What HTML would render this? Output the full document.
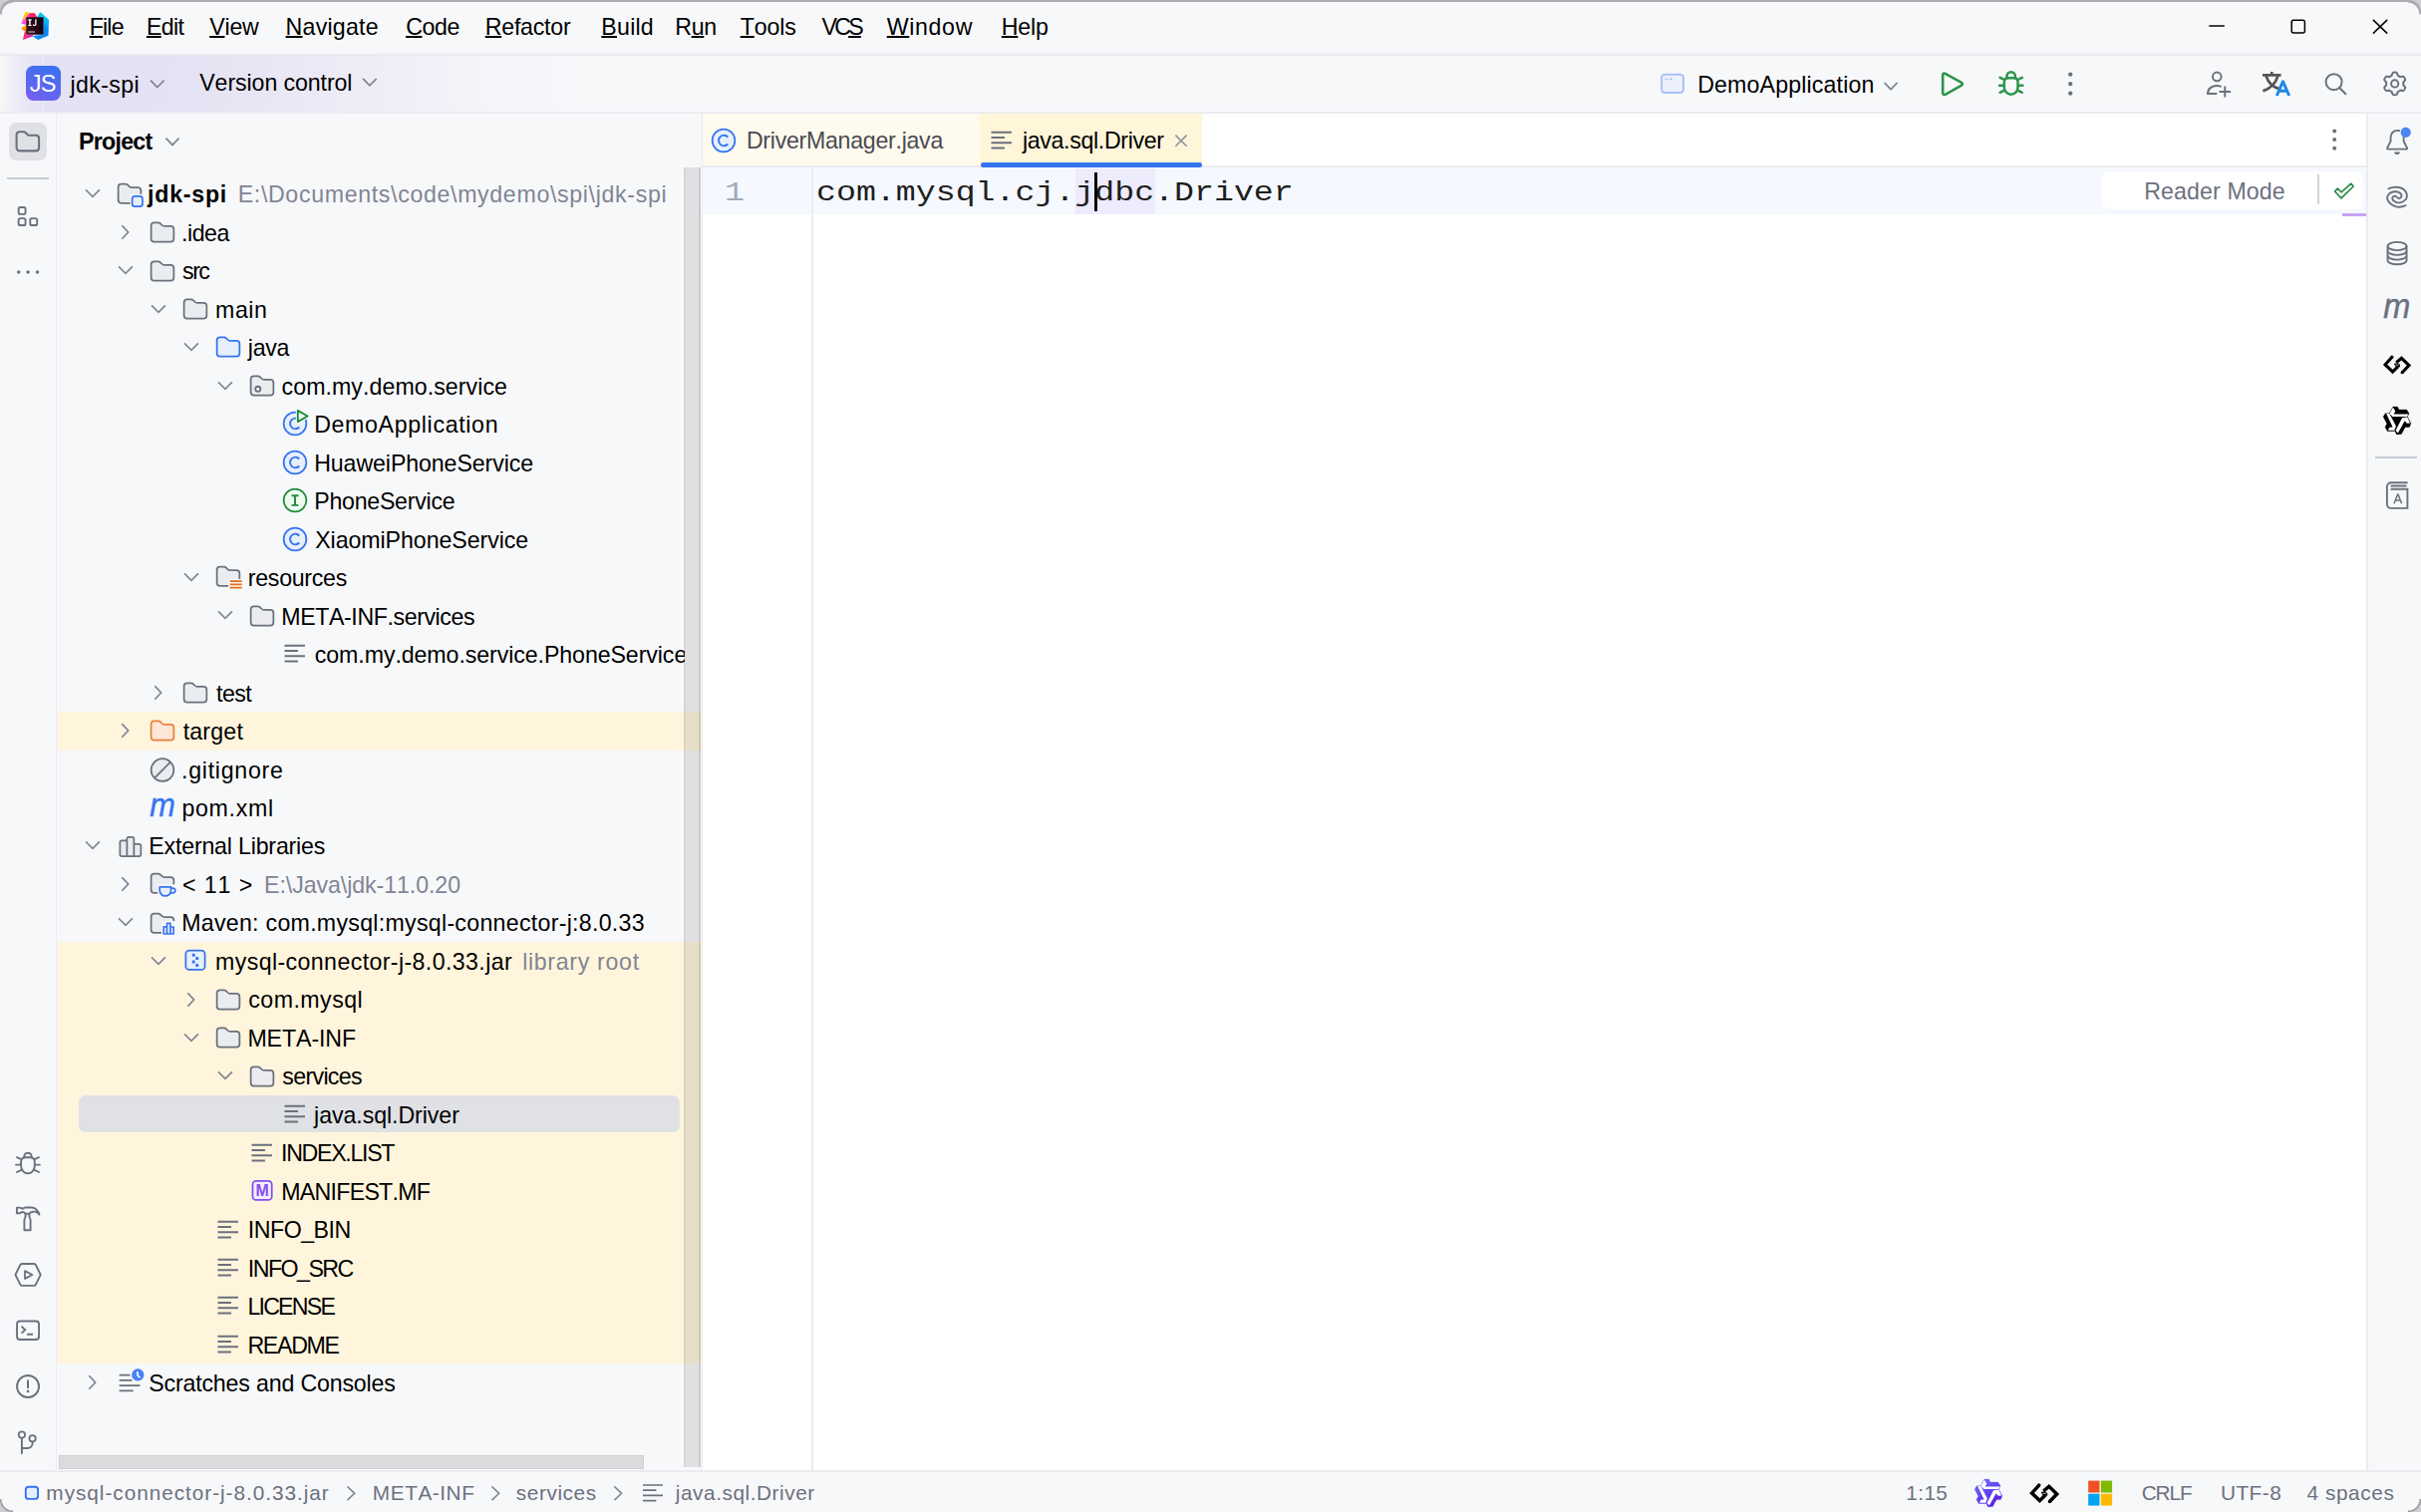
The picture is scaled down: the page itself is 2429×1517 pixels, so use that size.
<!DOCTYPE html><html><head><meta charset="utf-8"><title>jdk-spi</title><style>
*{box-sizing:border-box;margin:0;padding:0}
html,body{width:2429px;height:1517px;overflow:hidden;background:#cdced1;font-family:"Liberation Sans",sans-serif;font-kerning:none}
.abs,.t,svg{position:absolute}
.t{white-space:pre;display:block;height:40px;line-height:40px}
#frame{position:absolute;left:0;top:0;width:2429px;height:1517px;border-radius:12px;background:#adaeb1;overflow:hidden}
#win{position:absolute;left:0;top:2px;width:2429px;height:1515px;border-radius:11.5px 11.5px 12px 12px;background:#f7f8fa;overflow:hidden}
#page{position:absolute;left:0;top:-2px;width:2429px;height:1517px}
.hl{position:absolute;background:#ebecf0}
#toolbar{position:absolute;left:0;top:56px;width:2429px;height:56px;background:linear-gradient(90deg,#f7f8fa 0px,#eeedf7 14px,#e6e4f4 34px,#e3e1f3 44px,#e4e2f3 170px,#eae8f5 290px,#f0eff8 400px,#f5f5fa 500px,#f7f8fa 580px)}
#tree{position:absolute;left:0;top:0;width:686.5px;height:1459px;overflow:hidden}
.yl{position:absolute;left:58px;width:645.8px;height:38.7px;background:#fff5dc}
.sel{position:absolute;left:78.8px;width:603.4px;height:37.7px;border-radius:7px;background:#dfe1e5}
u{text-decoration:underline;text-decoration-thickness:1.75px;text-underline-offset:1.2px;text-decoration-skip-ink:none}
</style></head><body>
<div id="frame"><div id="win"><div id="page">
<div class="hl" style="left:0;top:54px;width:2429px;height:2px"></div>
<svg style="left:20.00px;top:10.00px" width="32" height="32" viewBox="0 0 32 32" fill="none" ><defs><linearGradient id="ly1" x1="0.7" y1="0" x2="0.2" y2="1"><stop offset="0" stop-color="#ffd500"/><stop offset=".55" stop-color="#ffb43c"/><stop offset="1" stop-color="#ff5bd0"/></linearGradient><linearGradient id="ly2" x1="0.5" y1="0" x2="0.4" y2="1"><stop offset="0" stop-color="#ffd000"/><stop offset=".6" stop-color="#ff8a00"/><stop offset="1" stop-color="#ff5a2a"/></linearGradient><linearGradient id="lb" x1="0.6" y1="0" x2="0.4" y2="1"><stop offset="0" stop-color="#08d0f5"/><stop offset=".3" stop-color="#0ab4f8"/><stop offset=".55" stop-color="#0a84fb"/><stop offset="1" stop-color="#0a8cf0"/></linearGradient><linearGradient id="lr" x1="0" y1="0" x2="1" y2="0.4"><stop offset="0" stop-color="#ff3060"/><stop offset=".6" stop-color="#fa2a8c"/><stop offset="1" stop-color="#c41ee0"/></linearGradient><linearGradient id="lk" x1="0" y1="0.6" x2="1" y2="0.4"><stop offset="0" stop-color="#3a1410"/><stop offset=".45" stop-color="#2a0618"/><stop offset="1" stop-color="#06060c"/></linearGradient></defs><path d="M5.35 1.97L8.99 2.11L6.37 8.22L1.28 13.32Z" fill="url(#ly1)"/><path d="M1.28 13.46L6.37 7.50L6.37 14.92Z" fill="#ff45ed"/><path d="M1.13 18.56L6.37 14.63L6.37 22.19L4.48 21.32Z" fill="url(#ly2)"/><path d="M9.13 3.28L14.52 2.98L17.43 6.91L17.43 7.79L6.22 7.79L7.53 5.60Z" fill="#ff2468"/><path d="M6.51 7.64L7.68 5.46L10.30 4.73L9.13 7.64Z" fill="#ff45ed" opacity=".8"/><path d="M20.34 2.05L29.07 9.68L28.49 25.69L18.16 30.11L12.48 25.98L23.69 24.67L23.69 7.50L17.14 7.41Z" fill="url(#lb)"/><path d="M6.22 21.61L6.22 24.96L12.63 24.81L13.35 26.27L2.88 29.91L4.62 22.19Z" fill="url(#lr)"/><path d="M6.22 7.35L23.69 7.35L23.69 24.81L6.22 24.81Z" fill="url(#lk)"/><path d="M8.26 9.24L11.61 9.24L11.61 10.41L10.65 10.41L10.65 14.92L11.61 14.92L11.61 16.08L8.26 16.08L8.26 14.92L9.22 14.92L9.22 10.41L8.26 10.41Z" fill="#fff"/><path d="M15.25 9.24L16.56 9.24L16.56 14.34L16.12 15.56L15.10 16.08L14.08 16.08L13.06 15.56L12.63 14.92L13.56 14.19L14.08 14.77L14.66 14.92L15.10 14.63L15.25 14.04Z" fill="#fff"/><path d="M8.26 21.26L15.01 21.26L15.01 22.83L8.26 22.83Z" fill="#9c9096"/></svg>
<span id="m0" class="t" style="left:89.74px;top:7px;font-size:23.2px;letter-spacing:-0.848px"><u>F</u>ile</span>
<span id="m1" class="t" style="left:146.93px;top:7px;font-size:23.2px;letter-spacing:-0.658px"><u>E</u>dit</span>
<span id="m2" class="t" style="left:210.21px;top:7px;font-size:23.2px;letter-spacing:-0.212px"><u>V</u>iew</span>
<span id="m3" class="t" style="left:286.61px;top:7px;font-size:23.2px;letter-spacing:0.198px"><u>N</u>avigate</span>
<span id="m4" class="t" style="left:407.15px;top:7px;font-size:23.2px;letter-spacing:-0.419px"><u>C</u>ode</span>
<span id="m5" class="t" style="left:486.74px;top:7px;font-size:23.2px;letter-spacing:-0.250px"><u>R</u>efactor</span>
<span id="m6" class="t" style="left:603.35px;top:7px;font-size:23.2px;letter-spacing:0.210px"><u>B</u>uild</span>
<span id="m7" class="t" style="left:677.13px;top:7px;font-size:23.2px;letter-spacing:-0.253px">R<u>u</u>n</span>
<span id="m8" class="t" style="left:742.74px;top:7px;font-size:23.2px;letter-spacing:-0.162px"><u>T</u>ools</span>
<span id="m9" class="t" style="left:824.44px;top:7px;font-size:23.2px;letter-spacing:-2.756px">VC<u>S</u></span>
<span id="m10" class="t" style="left:889.74px;top:7px;font-size:23.2px;letter-spacing:0.635px"><u>W</u>indow</span>
<span id="m11" class="t" style="left:1004.82px;top:7px;font-size:23.2px;letter-spacing:-0.222px"><u>H</u>elp</span>
<svg style="left:2200px;top:10px" width="210" height="35" viewBox="2200 10 210 35" fill="none" overflow="visible"><path d="M2216.3 25.9H2231.8" stroke="#000" stroke-width="1.5"/><rect x="2299.2" y="20.3" width="13.2" height="12.8" rx="2" stroke="#000" stroke-width="1.5"/><path d="M2380.9 19.9L2395.2 33.6M2395.2 19.9L2380.9 33.6" stroke="#000" stroke-width="1.5"/></svg>
<div id="toolbar"></div>
<div class="abs" style="left:43px;top:56px;width:1px;height:56px;background:rgba(255,255,255,.45)"></div>
<div class="hl" style="left:0;top:112px;width:2429px;height:1.9px"></div>
<div class="abs" style="left:26px;top:65.8px;width:35px;height:35px;border-radius:7.5px;background:linear-gradient(205deg,#3373f0 0%,#5569ef 50%,#7b5fee 100%)"></div>
<span id="js" class="t" style="left:29.72px;top:64px;font-size:23.6px;color:#fff;font-weight:normal;letter-spacing:-0.790px;">JS</span>
<span id="prj" class="t" style="left:70.61px;top:65px;font-size:23.2px;color:#000;font-weight:normal;letter-spacing:0.334px;">jdk-spi</span>
<svg style="left:148px;top:77px" width="20" height="15" viewBox="148 77 20 15" fill="none" overflow="visible"><path d="M151.6 81.19999999999999L157.8 87.6L164.0 81.19999999999999" stroke="#818594" stroke-width="1.75" stroke-linecap="square"/></svg>
<span id="vc" class="t" style="left:200.25px;top:63px;font-size:23.2px;color:#000;font-weight:normal;letter-spacing:-0.099px;">Version control</span>
<svg style="left:361px;top:75px" width="20" height="15" viewBox="361 75 20 15" fill="none" overflow="visible"><path d="M364.70000000000005 79.39999999999999L370.9 85.79999999999998L377.09999999999997 79.39999999999999" stroke="#818594" stroke-width="1.75" stroke-linecap="square"/></svg>
<svg style="left:1660px;top:68px" width="36" height="32" viewBox="1660 68 36 32" fill="none" overflow="visible"><rect x="1667.1" y="74.8" width="21.9" height="18.2" rx="3.2" fill="#edf1fd" stroke="#a9c2f8" stroke-width="2"/><path d="M1670.6 79.6H1673.4M1675.2 79.6H1678" stroke="#a9c2f8" stroke-width="1.5"/></svg>
<span id="da" class="t" style="left:1703.13px;top:65px;font-size:23.2px;color:#000;font-weight:normal;letter-spacing:0.142px;">DemoApplication</span>
<svg style="left:1887px;top:80px" width="20" height="14" viewBox="1887 80 20 14" fill="none" overflow="visible"><path d="M1891.1999999999998 83.6L1897.1 89.7L1903.0 83.6" stroke="#818594" stroke-width="1.75" stroke-linecap="square"/></svg>
<svg style="left:1940px;top:66px" width="38" height="36" viewBox="1940 66 38 36" fill="none" overflow="visible"><path d="M1949.2 75.2C1949.2 73.9 1950.6 73.1 1951.7 73.8L1968 82.9C1969.1 83.5 1969.1 85.1 1968 85.7L1951.7 94.8C1950.6 95.4 1949.2 94.6 1949.2 93.4Z" stroke="#2d9549" stroke-width="2.6" stroke-linejoin="round"/></svg>
<svg style="left:2000px;top:66px" width="36" height="36" viewBox="2000 66 36 36" fill="none" overflow="visible"><path d="M2010.8500000000001 82.5Q2010.8500000000001 78.3 2015.0500000000002 78.3H2020.35Q2024.55 78.3 2024.55 82.5V87.6A6.85 7.200000000000003 0 0 1 2010.8500000000001 87.6Z" stroke="#2d9549" stroke-width="2.5"/><path d="M2013.55 78.3V76.3A4.15 4.15 0 0 1 2021.8500000000001 76.3V78.3M2011.0 80.0L2006.6 77.8M2024.4 80.0L2028.8000000000002 77.8M2006.0 85.7H2010.6M2029.4 85.7H2024.8000000000002M2011.0 90.6L2006.6 92.8M2024.4 90.6L2028.8000000000002 92.8" stroke="#2d9549" stroke-width="2.5" stroke-linecap="round"/></svg>
<svg style="left:2072px;top:69px" width="11" height="30" viewBox="2072 69 11 30" fill="none" overflow="visible"><circle cx="2077.2" cy="74.6" r="2.2" fill="#6c707e"/><circle cx="2077.2" cy="84.1" r="2.2" fill="#6c707e"/><circle cx="2077.2" cy="93.6" r="2.2" fill="#6c707e"/></svg>
<svg style="left:2208px;top:66px" width="36" height="36" viewBox="2208 66 36 36" fill="none" overflow="visible"><circle cx="2224.3" cy="76.9" r="4.3" stroke="#6c707e" stroke-width="2"/><path d="M2215 94C2215 89 2219 86 2224.3 86C2225.8 86 2227 86.2 2228 86.6" stroke="#6c707e" stroke-width="2" stroke-linecap="round"/><path d="M2215 94.1H2223.5" stroke="#6c707e" stroke-width="2" stroke-linecap="round"/><path d="M2232.3 86.4V97.6M2226.6 92H2238" stroke="#6c707e" stroke-width="2"/></svg>
<svg style="left:2264px;top:66px" width="38" height="36" viewBox="2264 66 38 36" fill="none" overflow="visible"><path d="M2270 75.3H2288.6M2279.3 72V75.3M2273.6 76.2C2275.5 82.5 2280.5 87.6 2287.4 89.4M2285.4 76.2C2283.4 83.4 2278 88.8 2270.4 91.4" stroke="#555" stroke-width="2.7"/><path d="M2284.3 96L2290.4 82H2290.6L2296.7 96M2286.5 91.3H2294.5" stroke="#1e88e5" stroke-width="3" stroke-linejoin="miter"/></svg>
<svg style="left:2326px;top:66px" width="36" height="36" viewBox="2326 66 36 36" fill="none" overflow="visible"><circle cx="2341.6" cy="82.2" r="8" stroke="#6c707e" stroke-width="2"/><path d="M2347.4 88.2L2353.4 94.2" stroke="#6c707e" stroke-width="2" stroke-linecap="round"/></svg>
<svg style="left:2386px;top:66px" width="34" height="36" viewBox="2386 66 34 36" fill="none" overflow="visible"><path d="M2402.70 72.60L2403.29 72.62L2403.88 72.66L2404.47 72.74L2404.92 73.43L2405.28 74.29L2405.54 75.15L2405.78 75.87L2406.20 76.04L2406.60 76.24L2407.00 76.45L2407.38 76.69L2407.75 76.94L2408.11 77.22L2408.86 77.06L2409.74 76.86L2410.65 76.74L2411.48 76.79L2411.84 77.26L2412.18 77.75L2412.49 78.25L2412.77 78.77L2413.02 79.30L2413.25 79.85L2412.88 80.59L2412.31 81.32L2411.70 81.99L2411.19 82.55L2411.25 83.00L2411.29 83.45L2411.30 83.90L2411.29 84.35L2411.25 84.80L2411.19 85.25L2411.70 85.81L2412.31 86.48L2412.88 87.21L2413.25 87.95L2413.02 88.50L2412.77 89.03L2412.49 89.55L2412.18 90.05L2411.84 90.54L2411.48 91.01L2410.65 91.06L2409.74 90.94L2408.86 90.74L2408.11 90.58L2407.75 90.86L2407.38 91.11L2407.00 91.35L2406.60 91.56L2406.20 91.76L2405.78 91.93L2405.54 92.65L2405.28 93.51L2404.92 94.37L2404.47 95.06L2403.88 95.14L2403.29 95.18L2402.70 95.20L2402.11 95.18L2401.52 95.14L2400.93 95.06L2400.48 94.37L2400.12 93.51L2399.86 92.65L2399.62 91.93L2399.20 91.76L2398.80 91.56L2398.40 91.35L2398.02 91.11L2397.65 90.86L2397.29 90.58L2396.54 90.74L2395.66 90.94L2394.75 91.06L2393.92 91.01L2393.56 90.54L2393.22 90.05L2392.91 89.55L2392.63 89.03L2392.38 88.50L2392.15 87.95L2392.52 87.21L2393.09 86.48L2393.70 85.81L2394.21 85.25L2394.15 84.80L2394.11 84.35L2394.10 83.90L2394.11 83.45L2394.15 83.00L2394.21 82.55L2393.70 81.99L2393.09 81.32L2392.52 80.59L2392.15 79.85L2392.38 79.30L2392.63 78.77L2392.91 78.25L2393.22 77.75L2393.56 77.26L2393.92 76.79L2394.75 76.74L2395.66 76.86L2396.54 77.06L2397.29 77.22L2397.65 76.94L2398.02 76.69L2398.40 76.45L2398.80 76.24L2399.20 76.04L2399.62 75.87L2399.86 75.15L2400.12 74.29L2400.48 73.43L2400.93 72.74L2401.52 72.66L2402.11 72.62Z" stroke="#6c707e" stroke-width="2" stroke-linejoin="round"/><circle cx="2402.7" cy="83.9" r="3.6" stroke="#6c707e" stroke-width="2"/></svg>
<div class="hl" style="left:56.3px;top:114px;width:1.2px;height:1362px"></div>
<div class="abs" style="left:9px;top:122.8px;width:38px;height:38px;border-radius:7px;background:#dfe1e5"></div>
<svg style="left:14.1px;top:128.4px" width="27.7" height="27.7" viewBox="0 0 16 16" fill="none"><path d="M1.5 4.3C1.5 3.3 2.3 2.5 3.3 2.5H5.5C6 2.5 6.5 2.7 6.85 3.05L7.8 4C8.1 4.3 8.55 4.5 9 4.5H12.7C13.7 4.5 14.5 5.3 14.5 6.3V11.7C14.5 12.7 13.7 13.5 12.7 13.5H3.3C2.3 13.5 1.5 12.7 1.5 11.7Z" stroke="#6c707e" stroke-width="1.2"/></svg>
<div class="abs" style="left:7px;top:178.2px;width:42px;height:1.6px;background:#c9ccd6"></div>
<svg style="left:12px;top:202px" width="32" height="30" viewBox="12 202 32 30" fill="none" overflow="visible"><rect x="18.65" y="207.95" width="6.9" height="6.9" rx="1.6" stroke="#6c707e" stroke-width="1.9"/><rect x="18.65" y="219.1" width="6.9" height="6.9" rx="1.6" stroke="#6c707e" stroke-width="1.9"/><rect x="30.3" y="219.1" width="6.9" height="6.9" rx="1.6" stroke="#6c707e" stroke-width="1.9"/></svg>
<svg style="left:12px;top:266px" width="32" height="14" viewBox="12 266 32 14" fill="none" overflow="visible"><circle cx="18.7" cy="273" r="1.75" fill="#6c707e"/><circle cx="28.1" cy="273" r="1.75" fill="#6c707e"/><circle cx="37.5" cy="273" r="1.75" fill="#6c707e"/></svg>
<svg style="left:10px;top:1150px" width="36" height="34" viewBox="10 1150 36 34" fill="none" overflow="visible"><path d="M21.1 1165.8Q21.1 1161.2 25.700000000000003 1161.2H30.199999999999996Q34.8 1161.2 34.8 1165.8V1169.6A6.85 7.7000000000000455 0 0 1 21.1 1169.6Z" stroke="#6c707e" stroke-width="1.9"/><path d="M24.25 1161.2V1160.4A3.7 3.7 0 0 1 31.65 1160.4V1161.2M21.4 1163.1L16.9 1161.2M34.5 1163.1L39.0 1161.2M16.0 1168.6H20.8M39.9 1168.6H35.099999999999994M21.4 1173.8L16.9 1176.0M34.5 1173.8L39.0 1176.0" stroke="#6c707e" stroke-width="1.9" stroke-linecap="round"/></svg>
<svg style="left:10px;top:1205px" width="36" height="35" viewBox="10 1205 36 35" fill="none" overflow="visible"><path d="M16.9 1211.6H19.9C21 1211.6 21.7 1212.7 22.8 1212.7C23.9 1212.7 24.4 1211.5 25.5 1211.5H31.8C34 1211.5 35.6 1212.4 36.8 1213.8C38 1215.2 38.9 1216.8 39.5 1218.6C38.6 1217.4 37.8 1216.6 36.8 1216.1C35.6 1215.6 34.4 1215.6 33.1 1215.7C31.6 1215.8 30.1 1216.4 29.4 1217.8H25.2C24.9 1217 24.6 1216.6 24 1216.3C23.3 1216 22.8 1215.9 22.2 1216C21.3 1216.2 20.8 1217.1 19.9 1217.2H16.9Z" stroke="#6c707e" stroke-width="1.9" stroke-linejoin="round"/><path d="M25.7 1218.3C25.7 1219.6 25.7 1220.3 25.4 1221.2C25 1222.3 24.4 1223 24.4 1224.4V1234.2H30.6V1224.4C30.6 1223 30 1222.3 29.6 1221.2C29.3 1220.3 29.4 1219.6 29.4 1218.3" stroke="#6c707e" stroke-width="1.9" stroke-linejoin="round"/></svg>
<svg style="left:10px;top:1262px" width="36" height="34" viewBox="10 1262 36 34" fill="none" overflow="visible"><path d="M22 1268H34.2C34.9 1268 35.5 1268.4 35.8 1269L40.3 1278C40.6 1278.6 40.6 1279.3 40.3 1279.9L35.8 1288.9C35.5 1289.5 34.9 1289.9 34.2 1289.9H22C21.3 1289.9 20.7 1289.5 20.4 1288.9L15.9 1279.9C15.6 1279.3 15.6 1278.6 15.9 1278L20.4 1269C20.7 1268.4 21.3 1268 22 1268Z" stroke="#6c707e" stroke-width="1.9"/><path d="M25 1275.1V1282.9L32.4 1279Z" stroke="#6c707e" stroke-width="1.8" stroke-linejoin="round"/></svg>
<svg style="left:10px;top:1320px" width="36" height="30" viewBox="10 1320 36 30" fill="none" overflow="visible"><rect x="17.05" y="1325.55" width="22" height="18.4" rx="3" stroke="#6c707e" stroke-width="1.9"/><path d="M21.6 1330.8L25.2 1334.2L21.6 1337.6M27 1338.8H33" stroke="#6c707e" stroke-width="1.9"/></svg>
<svg style="left:10px;top:1376px" width="36" height="30" viewBox="10 1376 36 30" fill="none" overflow="visible"><circle cx="28.05" cy="1391" r="11" stroke="#6c707e" stroke-width="1.9"/><path d="M28 1384.6V1393" stroke="#6c707e" stroke-width="2"/><circle cx="28" cy="1395.9" r="1.3" fill="#6c707e"/></svg>
<svg style="left:10px;top:1432px" width="36" height="32" viewBox="10 1432 36 32" fill="none" overflow="visible"><circle cx="21.9" cy="1439.6" r="3.15" stroke="#6c707e" stroke-width="1.8"/><circle cx="32.6" cy="1443.3" r="3.15" stroke="#6c707e" stroke-width="1.8"/><path d="M21.9 1442.8V1458.8M21.9 1453H27.6C30.4 1453 32.6 1450.8 32.6 1448V1446.5" stroke="#6c707e" stroke-width="1.9"/></svg>
<span id="ph" class="t" style="left:79.01px;top:122px;font-size:23.2px;color:#000;font-weight:bold;letter-spacing:-0.726px;">Project</span>
<svg style="left:163px;top:135px" width="20" height="15" viewBox="163 135 20 15" fill="none" overflow="visible"><path d="M167.0 139.2L173.0 145.39999999999998L179.0 139.2" stroke="#818594" stroke-width="1.75" stroke-linecap="square"/></svg>
<div class="yl" style="top:714.05px"></div><div class="yl" style="top:944.93px"></div><div class="yl" style="top:983.41px"></div><div class="yl" style="top:1021.89px"></div><div class="yl" style="top:1060.37px"></div><div class="yl" style="top:1098.85px"></div><div class="yl" style="top:1137.33px"></div><div class="yl" style="top:1175.81px"></div><div class="yl" style="top:1214.29px"></div><div class="yl" style="top:1252.77px"></div><div class="yl" style="top:1291.25px"></div><div class="yl" style="top:1329.73px"></div>
<div id="tree"><svg style="left:82.80px;top:184.17px" width="20" height="20" viewBox="0 0 20 20" fill="none" ><path d="M3.7 7.05L10 13.35L16.3 7.05" stroke="#818594" stroke-width="1.75" stroke-linecap="square"/></svg><svg style="left:116.00px;top:180.57px" width="28" height="28" viewBox="0 0 16 16" fill="none" overflow="visible"><path d="M1.5 4.3C1.5 3.3 2.3 2.5 3.3 2.5H5.5C6 2.5 6.5 2.7 6.85 3.05L7.8 4C8.1 4.3 8.55 4.5 9 4.5H12.7C13.7 4.5 14.5 5.3 14.5 6.3V11.7C14.5 12.7 13.7 13.5 12.7 13.5H3.3C2.3 13.5 1.5 12.7 1.5 11.7Z" fill="#ebecf0" stroke="#6c707e" transform="translate(0 -0.5)"/><rect x="8.35" y="7.9" width="8" height="8.2" fill="#f7f8fa"/><rect x="9.5" y="9.05" width="5.9" height="5.9" rx="1.5" fill="#e7effd" stroke="#3574f0"/></svg><span id="r0" class="t" style="left:148.10px;top:175px;font-size:23.2px;color:#000;font-weight:bold;letter-spacing:0.736px;">jdk-spi</span><span id="g0" class="t" style="left:238.68px;top:175px;font-size:23.2px;color:#818594;font-weight:normal;letter-spacing:0.648px;">E:\Documents\code\mydemo\spi\jdk-spi</span><svg style="left:116.00px;top:223.05px" width="20" height="20" viewBox="0 0 20 20" fill="none" ><path d="M6.9 3.9L12.6 10L6.9 16.1" stroke="#818594" stroke-width="1.75" stroke-linecap="square"/></svg><svg style="left:149.00px;top:219.05px" width="28" height="28" viewBox="0 0 16 16" fill="none" overflow="visible"><path d="M1.5 4.3C1.5 3.3 2.3 2.5 3.3 2.5H5.5C6 2.5 6.5 2.7 6.85 3.05L7.8 4C8.1 4.3 8.55 4.5 9 4.5H12.7C13.7 4.5 14.5 5.3 14.5 6.3V11.7C14.5 12.7 13.7 13.5 12.7 13.5H3.3C2.3 13.5 1.5 12.7 1.5 11.7Z" fill="#ebecf0" stroke="#6c707e" transform="translate(0 0)"/></svg><span id="r1" class="t" style="left:182.00px;top:214px;font-size:23.2px;color:#000;font-weight:normal;letter-spacing:-0.475px;">.idea</span><svg style="left:115.80px;top:261.13px" width="20" height="20" viewBox="0 0 20 20" fill="none" ><path d="M3.7 7.05L10 13.35L16.3 7.05" stroke="#818594" stroke-width="1.75" stroke-linecap="square"/></svg><svg style="left:149.00px;top:257.53px" width="28" height="28" viewBox="0 0 16 16" fill="none" overflow="visible"><path d="M1.5 4.3C1.5 3.3 2.3 2.5 3.3 2.5H5.5C6 2.5 6.5 2.7 6.85 3.05L7.8 4C8.1 4.3 8.55 4.5 9 4.5H12.7C13.7 4.5 14.5 5.3 14.5 6.3V11.7C14.5 12.7 13.7 13.5 12.7 13.5H3.3C2.3 13.5 1.5 12.7 1.5 11.7Z" fill="#ebecf0" stroke="#6c707e" transform="translate(0 0)"/></svg><span id="r2" class="t" style="left:183.11px;top:252px;font-size:23.2px;color:#000;font-weight:normal;letter-spacing:-1.525px;">src</span><svg style="left:148.80px;top:299.61px" width="20" height="20" viewBox="0 0 20 20" fill="none" ><path d="M3.7 7.05L10 13.35L16.3 7.05" stroke="#818594" stroke-width="1.75" stroke-linecap="square"/></svg><svg style="left:182.00px;top:296.01px" width="28" height="28" viewBox="0 0 16 16" fill="none" overflow="visible"><path d="M1.5 4.3C1.5 3.3 2.3 2.5 3.3 2.5H5.5C6 2.5 6.5 2.7 6.85 3.05L7.8 4C8.1 4.3 8.55 4.5 9 4.5H12.7C13.7 4.5 14.5 5.3 14.5 6.3V11.7C14.5 12.7 13.7 13.5 12.7 13.5H3.3C2.3 13.5 1.5 12.7 1.5 11.7Z" fill="#ebecf0" stroke="#6c707e" transform="translate(0 0)"/></svg><span id="r3" class="t" style="left:216.04px;top:291px;font-size:23.2px;color:#000;font-weight:normal;letter-spacing:0.530px;">main</span><svg style="left:181.80px;top:338.09px" width="20" height="20" viewBox="0 0 20 20" fill="none" ><path d="M3.7 7.05L10 13.35L16.3 7.05" stroke="#818594" stroke-width="1.75" stroke-linecap="square"/></svg><svg style="left:215.00px;top:334.49px" width="28" height="28" viewBox="0 0 16 16" fill="none" overflow="visible"><path d="M1.5 4.3C1.5 3.3 2.3 2.5 3.3 2.5H5.5C6 2.5 6.5 2.7 6.85 3.05L7.8 4C8.1 4.3 8.55 4.5 9 4.5H12.7C13.7 4.5 14.5 5.3 14.5 6.3V11.7C14.5 12.7 13.7 13.5 12.7 13.5H3.3C2.3 13.5 1.5 12.7 1.5 11.7Z" fill="#e7effd" stroke="#3574f0" transform="translate(0 0)"/></svg><span id="r4" class="t" style="left:248.86px;top:329px;font-size:23.2px;color:#000;font-weight:normal;letter-spacing:-0.364px;">java</span><svg style="left:215.80px;top:376.57px" width="20" height="20" viewBox="0 0 20 20" fill="none" ><path d="M3.7 7.05L10 13.35L16.3 7.05" stroke="#818594" stroke-width="1.75" stroke-linecap="square"/></svg><svg style="left:249.00px;top:372.97px" width="28" height="28" viewBox="0 0 16 16" fill="none" overflow="visible"><path d="M1.5 4.3C1.5 3.3 2.3 2.5 3.3 2.5H5.5C6 2.5 6.5 2.7 6.85 3.05L7.8 4C8.1 4.3 8.55 4.5 9 4.5H12.7C13.7 4.5 14.5 5.3 14.5 6.3V11.7C14.5 12.7 13.7 13.5 12.7 13.5H3.3C2.3 13.5 1.5 12.7 1.5 11.7Z" fill="#ebecf0" stroke="#6c707e" transform="translate(0 0)"/><circle cx="5.6" cy="9.9" r="1.45" stroke="#6c707e" stroke-width="1.05" fill="#f7f8fa"/></svg><span id="r5" class="t" style="left:282.56px;top:368px;font-size:23.2px;color:#000;font-weight:normal;letter-spacing:0.053px;">com.my.demo.service</span><svg style="left:282.00px;top:411.45px" width="28" height="28" viewBox="0 0 16 16" fill="none" overflow="visible"><circle cx="8" cy="8" r="6.5" fill="#e7effd" stroke="#3574f0"/><path d="M10.45 6.0A3.0 3.05 0 1 0 10.45 10.0" stroke="#3574f0" stroke-width="1.1"/><path d="M9.6 0.55L15.2 3.7L9.6 6.9Z" fill="#f7f8fa" stroke="#f7f8fa" stroke-width="2.3" stroke-linejoin="round"/><path d="M9.6 0.55L15.2 3.7L9.6 6.9Z" fill="#eefaf0" stroke="#208a3c" stroke-width="1.1" stroke-linejoin="round"/></svg><span id="r6" class="t" style="left:315.18px;top:406px;font-size:23.2px;color:#000;font-weight:normal;letter-spacing:0.649px;">DemoApplication</span><svg style="left:282.00px;top:449.93px" width="28" height="28" viewBox="0 0 16 16" fill="none" overflow="visible"><circle cx="8" cy="8" r="6.5" fill="#e7effd" stroke="#3574f0"/><path d="M10.45 6.0A3.0 3.05 0 1 0 10.45 10.0" stroke="#3574f0" stroke-width="1.1"/></svg><span id="r7" class="t" style="left:315.18px;top:445px;font-size:23.2px;color:#000;font-weight:normal;letter-spacing:-0.104px;">HuaweiPhoneService</span><svg style="left:282.00px;top:488.41px" width="28" height="28" viewBox="0 0 16 16" fill="none" overflow="visible"><circle cx="8" cy="8" r="6.5" fill="#eefaf0" stroke="#208a3c"/><path d="M8 5.3V10.8M6.05 5.3H9.95M6.05 10.8H9.95" stroke="#208a3c" stroke-width="1.1"/></svg><span id="r8" class="t" style="left:315.18px;top:483px;font-size:23.2px;color:#000;font-weight:normal;letter-spacing:-0.261px;">PhoneService</span><svg style="left:282.00px;top:526.89px" width="28" height="28" viewBox="0 0 16 16" fill="none" overflow="visible"><circle cx="8" cy="8" r="6.5" fill="#e7effd" stroke="#3574f0"/><path d="M10.45 6.0A3.0 3.05 0 1 0 10.45 10.0" stroke="#3574f0" stroke-width="1.1"/></svg><span id="r9" class="t" style="left:316.21px;top:522px;font-size:23.2px;color:#000;font-weight:normal;letter-spacing:-0.077px;">XiaomiPhoneService</span><svg style="left:181.80px;top:568.97px" width="20" height="20" viewBox="0 0 20 20" fill="none" ><path d="M3.7 7.05L10 13.35L16.3 7.05" stroke="#818594" stroke-width="1.75" stroke-linecap="square"/></svg><svg style="left:215.00px;top:565.37px" width="28" height="28" viewBox="0 0 16 16" fill="none" overflow="visible"><path d="M1.5 4.3C1.5 3.3 2.3 2.5 3.3 2.5H5.5C6 2.5 6.5 2.7 6.85 3.05L7.8 4C8.1 4.3 8.55 4.5 9 4.5H12.7C13.7 4.5 14.5 5.3 14.5 6.3V11.7C14.5 12.7 13.7 13.5 12.7 13.5H3.3C2.3 13.5 1.5 12.7 1.5 11.7Z" fill="#ebecf0" stroke="#6c707e" transform="translate(0 -0.4)"/><rect x="8.1" y="9.1" width="8" height="7" fill="#f7f8fa"/><path d="M9 10.35H15.8M9 12.2H15.8M9 14.05H15.8" stroke="#e66d17" stroke-width="1.1"/></svg><span id="r10" class="t" style="left:248.77px;top:560px;font-size:23.2px;color:#000;font-weight:normal;letter-spacing:-0.280px;">resources</span><svg style="left:215.80px;top:607.45px" width="20" height="20" viewBox="0 0 20 20" fill="none" ><path d="M3.7 7.05L10 13.35L16.3 7.05" stroke="#818594" stroke-width="1.75" stroke-linecap="square"/></svg><svg style="left:249.00px;top:603.85px" width="28" height="28" viewBox="0 0 16 16" fill="none" overflow="visible"><path d="M1.5 4.3C1.5 3.3 2.3 2.5 3.3 2.5H5.5C6 2.5 6.5 2.7 6.85 3.05L7.8 4C8.1 4.3 8.55 4.5 9 4.5H12.7C13.7 4.5 14.5 5.3 14.5 6.3V11.7C14.5 12.7 13.7 13.5 12.7 13.5H3.3C2.3 13.5 1.5 12.7 1.5 11.7Z" fill="#ebecf0" stroke="#6c707e" transform="translate(0 0)"/></svg><span id="r11" class="t" style="left:282.31px;top:599px;font-size:23.2px;color:#000;font-weight:normal;letter-spacing:-0.416px;">META-INF.services</span><svg style="left:282.00px;top:642.33px" width="28" height="28" viewBox="0 0 16 16" fill="none" overflow="visible"><path d="M2 3.3H13.7M2 6.3H9.7M2 9.3H13.7M2 12.3H9.7" stroke="#6c707e" stroke-width="1.05"/></svg><span id="r12" class="t" style="left:315.78px;top:637px;font-size:23.2px;color:#000;font-weight:normal;letter-spacing:-0.090px;">com.my.demo.service.PhoneService</span><svg style="left:149.00px;top:684.81px" width="20" height="20" viewBox="0 0 20 20" fill="none" ><path d="M6.9 3.9L12.6 10L6.9 16.1" stroke="#818594" stroke-width="1.75" stroke-linecap="square"/></svg><svg style="left:182.00px;top:680.81px" width="28" height="28" viewBox="0 0 16 16" fill="none" overflow="visible"><path d="M1.5 4.3C1.5 3.3 2.3 2.5 3.3 2.5H5.5C6 2.5 6.5 2.7 6.85 3.05L7.8 4C8.1 4.3 8.55 4.5 9 4.5H12.7C13.7 4.5 14.5 5.3 14.5 6.3V11.7C14.5 12.7 13.7 13.5 12.7 13.5H3.3C2.3 13.5 1.5 12.7 1.5 11.7Z" fill="#ebecf0" stroke="#6c707e" transform="translate(0 0)"/></svg><span id="r13" class="t" style="left:217.12px;top:676px;font-size:23.2px;color:#000;font-weight:normal;letter-spacing:-0.620px;">test</span><svg style="left:116.00px;top:723.29px" width="20" height="20" viewBox="0 0 20 20" fill="none" ><path d="M6.9 3.9L12.6 10L6.9 16.1" stroke="#818594" stroke-width="1.75" stroke-linecap="square"/></svg><svg style="left:149.00px;top:719.29px" width="28" height="28" viewBox="0 0 16 16" fill="none" overflow="visible"><path d="M1.5 4.3C1.5 3.3 2.3 2.5 3.3 2.5H5.5C6 2.5 6.5 2.7 6.85 3.05L7.8 4C8.1 4.3 8.55 4.5 9 4.5H12.7C13.7 4.5 14.5 5.3 14.5 6.3V11.7C14.5 12.7 13.7 13.5 12.7 13.5H3.3C2.3 13.5 1.5 12.7 1.5 11.7Z" fill="#fde6d6" stroke="#e9803c" transform="translate(0 0)"/></svg><span id="r14" class="t" style="left:183.65px;top:714px;font-size:23.2px;color:#000;font-weight:normal;letter-spacing:0.193px;">target</span><svg style="left:149.00px;top:757.77px" width="28" height="28" viewBox="0 0 16 16" fill="none" overflow="visible"><g transform="translate(0 0.33)"><circle cx="8" cy="8" r="6.5" fill="#ebecf0" stroke="#6c707e"/><path d="M3.6 12.4L12.4 3.6" stroke="#6c707e"/></g></svg><span id="r15" class="t" style="left:182.00px;top:753px;font-size:23.2px;color:#000;font-weight:normal;letter-spacing:0.727px;">.gitignore</span><svg style="left:149.00px;top:796.25px" width="28" height="28" viewBox="0 0 16 16" fill="none" overflow="visible"><text x="0.7" y="13.4" font-family="Liberation Sans" font-style="italic" font-size="18.7" textLength="14.6" lengthAdjust="spacingAndGlyphs" fill="#3574f0" stroke="#3574f0" stroke-width="0.25">m</text></svg><span id="r16" class="t" style="left:182.51px;top:791px;font-size:23.2px;color:#000;font-weight:normal;letter-spacing:0.656px;">pom.xml</span><svg style="left:82.80px;top:838.33px" width="20" height="20" viewBox="0 0 20 20" fill="none" ><path d="M3.7 7.05L10 13.35L16.3 7.05" stroke="#818594" stroke-width="1.75" stroke-linecap="square"/></svg><svg style="left:116.00px;top:834.73px" width="28" height="28" viewBox="0 0 16 16" fill="none" overflow="visible"><path d="M2.5 5.5C2.5 4.95 2.95 4.5 3.5 4.5H6.5V13.5H3.5C2.95 13.5 2.5 13.05 2.5 12.5ZM6.5 3.5C6.5 2.95 6.95 2.5 7.5 2.5H9.5C10.05 2.5 10.5 2.95 10.5 3.5V13.5H6.5ZM10.5 6.5H13.5C14.05 6.5 14.5 6.95 14.5 7.5V12.5C14.5 13.05 14.05 13.5 13.5 13.5H10.5Z" fill="#ebecf0" stroke="#6c707e" transform="translate(0 0.28)"/></svg><span id="r17" class="t" style="left:149.31px;top:829px;font-size:23.2px;color:#000;font-weight:normal;letter-spacing:-0.198px;">External Libraries</span><svg style="left:116.00px;top:877.21px" width="20" height="20" viewBox="0 0 20 20" fill="none" ><path d="M6.9 3.9L12.6 10L6.9 16.1" stroke="#818594" stroke-width="1.75" stroke-linecap="square"/></svg><svg style="left:149.00px;top:873.21px" width="28" height="28" viewBox="0 0 16 16" fill="none" overflow="visible"><path d="M1.5 4.3C1.5 3.3 2.3 2.5 3.3 2.5H5.5C6 2.5 6.5 2.7 6.85 3.05L7.8 4C8.1 4.3 8.55 4.5 9 4.5H12.7C13.7 4.5 14.5 5.3 14.5 6.3V11.7C14.5 12.7 13.7 13.5 12.7 13.5H3.3C2.3 13.5 1.5 12.7 1.5 11.7Z" fill="#ebecf0" stroke="#6c707e" transform="translate(0 -0.45)"/><rect x="5.2" y="8.2" width="11" height="8" fill="#f7f8fa"/><path d="M12.9 10.4H13.9C14.7 10.4 15.3 11 15.3 11.7C15.3 12.5 14.7 13.1 13.9 13.1H12.6" stroke="#3574f0" fill="none"/><path d="M6.4 9.6H12.9V11.6C12.9 13.4 11.45 14.85 9.65 14.85C7.85 14.85 6.4 13.4 6.4 11.6Z" fill="#e7effd" stroke="#3574f0" stroke-linejoin="round"/></svg><span id="r18" class="t" style="left:182.95px;top:868px;font-size:23.2px;color:#000;font-weight:normal;letter-spacing:0.895px;">&lt; 11 &gt;</span><span id="g18" class="t" style="left:265.10px;top:868px;font-size:23.2px;color:#818594;font-weight:normal;letter-spacing:-0.084px;">E:\Java\jdk-11.0.20</span><svg style="left:115.80px;top:915.29px" width="20" height="20" viewBox="0 0 20 20" fill="none" ><path d="M3.7 7.05L10 13.35L16.3 7.05" stroke="#818594" stroke-width="1.75" stroke-linecap="square"/></svg><svg style="left:149.00px;top:911.69px" width="28" height="28" viewBox="0 0 16 16" fill="none" overflow="visible"><path d="M1.5 4.3C1.5 3.3 2.3 2.5 3.3 2.5H5.5C6 2.5 6.5 2.7 6.85 3.05L7.8 4C8.1 4.3 8.55 4.5 9 4.5H12.7C13.7 4.5 14.5 5.3 14.5 6.3V11.7C14.5 12.7 13.7 13.5 12.7 13.5H3.3C2.3 13.5 1.5 12.7 1.5 11.7Z" fill="#ebecf0" stroke="#6c707e" transform="translate(0 0.1)"/><rect x="7.4" y="6.9" width="9" height="9" fill="#f7f8fa"/><path d="M8.7 10.2H10.6V14.3H8.7ZM10.6 8.2H12.5V14.3H10.6ZM12.5 10.3H14.4V14.3H12.5Z" fill="#e7effd" stroke="#3574f0" stroke-width="0.95" stroke-linejoin="round"/></svg><span id="r19" class="t" style="left:182.18px;top:906px;font-size:23.2px;color:#000;font-weight:normal;letter-spacing:0.270px;">Maven: com.mysql:mysql-connector-j:8.0.33</span><svg style="left:148.80px;top:953.77px" width="20" height="20" viewBox="0 0 20 20" fill="none" ><path d="M3.7 7.05L10 13.35L16.3 7.05" stroke="#818594" stroke-width="1.75" stroke-linecap="square"/></svg><svg style="left:182.00px;top:950.17px" width="28" height="28" viewBox="0 0 16 16" fill="none" overflow="visible"><rect x="2.5" y="2.1" width="11" height="11" rx="2" fill="#e7effd" stroke="#3574f0"/><rect x="6.15" y="3.8000000000000003" width="1.7" height="1.7" rx="0.5" fill="#3574f0"/><rect x="8.15" y="5.75" width="1.7" height="1.7" rx="0.5" fill="#3574f0"/><rect x="6.15" y="7.75" width="1.7" height="1.7" rx="0.5" fill="#3574f0"/><rect x="8.15" y="9.75" width="1.7" height="1.7" rx="0.5" fill="#3574f0"/></svg><span id="r20" class="t" style="left:216.04px;top:945px;font-size:23.2px;color:#000;font-weight:normal;letter-spacing:0.380px;">mysql-connector-j-8.0.33.jar</span><span id="g20" class="t" style="left:524.16px;top:945px;font-size:23.2px;color:#818594;font-weight:normal;letter-spacing:0.672px;">library root</span><svg style="left:182.00px;top:992.65px" width="20" height="20" viewBox="0 0 20 20" fill="none" ><path d="M6.9 3.9L12.6 10L6.9 16.1" stroke="#818594" stroke-width="1.75" stroke-linecap="square"/></svg><svg style="left:215.00px;top:988.65px" width="28" height="28" viewBox="0 0 16 16" fill="none" overflow="visible"><path d="M1.5 4.3C1.5 3.3 2.3 2.5 3.3 2.5H5.5C6 2.5 6.5 2.7 6.85 3.05L7.8 4C8.1 4.3 8.55 4.5 9 4.5H12.7C13.7 4.5 14.5 5.3 14.5 6.3V11.7C14.5 12.7 13.7 13.5 12.7 13.5H3.3C2.3 13.5 1.5 12.7 1.5 11.7Z" fill="#ebecf0" stroke="#6c707e" transform="translate(0 0)"/></svg><span id="r21" class="t" style="left:249.22px;top:983px;font-size:23.2px;color:#000;font-weight:normal;letter-spacing:0.466px;">com.mysql</span><svg style="left:181.80px;top:1030.73px" width="20" height="20" viewBox="0 0 20 20" fill="none" ><path d="M3.7 7.05L10 13.35L16.3 7.05" stroke="#818594" stroke-width="1.75" stroke-linecap="square"/></svg><svg style="left:215.00px;top:1027.13px" width="28" height="28" viewBox="0 0 16 16" fill="none" overflow="visible"><path d="M1.5 4.3C1.5 3.3 2.3 2.5 3.3 2.5H5.5C6 2.5 6.5 2.7 6.85 3.05L7.8 4C8.1 4.3 8.55 4.5 9 4.5H12.7C13.7 4.5 14.5 5.3 14.5 6.3V11.7C14.5 12.7 13.7 13.5 12.7 13.5H3.3C2.3 13.5 1.5 12.7 1.5 11.7Z" fill="#ebecf0" stroke="#6c707e" transform="translate(0 0)"/></svg><span id="r22" class="t" style="left:248.40px;top:1022px;font-size:23.2px;color:#000;font-weight:normal;letter-spacing:-0.100px;">META-INF</span><svg style="left:215.80px;top:1069.21px" width="20" height="20" viewBox="0 0 20 20" fill="none" ><path d="M3.7 7.05L10 13.35L16.3 7.05" stroke="#818594" stroke-width="1.75" stroke-linecap="square"/></svg><svg style="left:249.00px;top:1065.61px" width="28" height="28" viewBox="0 0 16 16" fill="none" overflow="visible"><path d="M1.5 4.3C1.5 3.3 2.3 2.5 3.3 2.5H5.5C6 2.5 6.5 2.7 6.85 3.05L7.8 4C8.1 4.3 8.55 4.5 9 4.5H12.7C13.7 4.5 14.5 5.3 14.5 6.3V11.7C14.5 12.7 13.7 13.5 12.7 13.5H3.3C2.3 13.5 1.5 12.7 1.5 11.7Z" fill="#ebecf0" stroke="#6c707e" transform="translate(0 0)"/></svg><span id="r23" class="t" style="left:283.34px;top:1060px;font-size:23.2px;color:#000;font-weight:normal;letter-spacing:-0.682px;">services</span><div class="sel" style="top:1098.65px"></div><svg style="left:282.00px;top:1104.09px" width="28" height="28" viewBox="0 0 16 16" fill="none" overflow="visible"><path d="M2 3.3H13.7M2 6.3H9.7M2 9.3H13.7M2 12.3H9.7" stroke="#6c707e" stroke-width="1.05"/></svg><span id="r24" class="t" style="left:315.12px;top:1099px;font-size:23.2px;color:#000;font-weight:normal;letter-spacing:-0.082px;">java.sql.Driver</span><svg style="left:249.00px;top:1142.57px" width="28" height="28" viewBox="0 0 16 16" fill="none" overflow="visible"><path d="M2 3.3H13.7M2 6.3H9.7M2 9.3H13.7M2 12.3H9.7" stroke="#6c707e" stroke-width="1.05"/></svg><span id="r25" class="t" style="left:282.05px;top:1137px;font-size:23.2px;color:#000;font-weight:normal;letter-spacing:-1.315px;">INDEX.LIST</span><svg style="left:249.00px;top:1181.05px" width="28" height="28" viewBox="0 0 16 16" fill="none" overflow="visible"><rect x="2.55" y="2.2" width="11" height="10.9" rx="2" fill="#f3edff" stroke="#834df0"/><text x="8.05" y="10.85" text-anchor="middle" font-family="Liberation Sans" font-weight="bold" font-size="9.1" fill="#834df0">M</text></svg><span id="r26" class="t" style="left:282.31px;top:1176px;font-size:23.2px;color:#000;font-weight:normal;letter-spacing:-0.752px;">MANIFEST.MF</span><svg style="left:215.00px;top:1219.53px" width="28" height="28" viewBox="0 0 16 16" fill="none" overflow="visible"><path d="M2 3.3H13.7M2 6.3H9.7M2 9.3H13.7M2 12.3H9.7" stroke="#6c707e" stroke-width="1.05"/></svg><span id="r27" class="t" style="left:248.81px;top:1214px;font-size:23.2px;color:#000;font-weight:normal;letter-spacing:-0.507px;">INFO_BIN</span><svg style="left:215.00px;top:1258.01px" width="28" height="28" viewBox="0 0 16 16" fill="none" overflow="visible"><path d="M2 3.3H13.7M2 6.3H9.7M2 9.3H13.7M2 12.3H9.7" stroke="#6c707e" stroke-width="1.05"/></svg><span id="r28" class="t" style="left:248.81px;top:1253px;font-size:23.2px;color:#000;font-weight:normal;letter-spacing:-1.531px;">INFO_SRC</span><svg style="left:215.00px;top:1296.49px" width="28" height="28" viewBox="0 0 16 16" fill="none" overflow="visible"><path d="M2 3.3H13.7M2 6.3H9.7M2 9.3H13.7M2 12.3H9.7" stroke="#6c707e" stroke-width="1.05"/></svg><span id="r29" class="t" style="left:248.40px;top:1291px;font-size:23.2px;color:#000;font-weight:normal;letter-spacing:-1.795px;">LICENSE</span><svg style="left:215.00px;top:1334.97px" width="28" height="28" viewBox="0 0 16 16" fill="none" overflow="visible"><path d="M2 3.3H13.7M2 6.3H9.7M2 9.3H13.7M2 12.3H9.7" stroke="#6c707e" stroke-width="1.05"/></svg><span id="r30" class="t" style="left:248.40px;top:1330px;font-size:23.2px;color:#000;font-weight:normal;letter-spacing:-1.309px;">README</span><svg style="left:83.00px;top:1377.45px" width="20" height="20" viewBox="0 0 20 20" fill="none" ><path d="M6.9 3.9L12.6 10L6.9 16.1" stroke="#818594" stroke-width="1.75" stroke-linecap="square"/></svg><svg style="left:116.00px;top:1373.45px" width="28" height="28" viewBox="0 0 16 16" fill="none" overflow="visible"><g transform="translate(0 0.33)"><path d="M2.1 3.5H8.3M2.1 6.5H9.4M2.1 9.5H14M2.1 12.5H10.1" stroke="#6c707e" stroke-width="1.05"/><circle cx="12.75" cy="3.35" r="3.5" fill="#4682f3"/><path d="M12.6 1.4V3.6L14.0 4.95" stroke="#fff" stroke-width="0.95"/></g></svg><span id="r31" class="t" style="left:149.24px;top:1368px;font-size:23.2px;color:#000;font-weight:normal;letter-spacing:-0.179px;">Scratches and Consoles</span></div>
<div class="abs" style="left:686.1px;top:168.1px;width:16.7px;height:1303.6px;background:rgba(40,40,50,.115);border-left:2px solid rgba(0,0,0,.04);border-right:2px solid rgba(0,0,0,.09)"></div>
<div class="abs" style="left:59.3px;top:1459.6px;width:587px;height:14.2px;background:#dcdcde;border:1px solid #cfcfd2"></div>
<div class="hl" style="left:703.8px;top:114px;width:1.2px;height:1362px"></div>
<div class="abs" style="left:705px;top:114px;width:1669.6px;height:1362px;background:#fff"></div>
<div class="abs" style="left:705px;top:114px;width:278.2px;height:52.2px;background:#fffaee"></div>
<div class="abs" style="left:983.2px;top:114px;width:222.8px;height:52.2px;background:#fff5d9"></div>
<div class="hl" style="left:705px;top:166px;width:1669.6px;height:2.1px"></div>
<div class="abs" style="left:983.6px;top:162.8px;width:222px;height:5.4px;border-radius:3px;background:#3574f0"></div>
<svg style="left:712.00px;top:127.20px" width="28" height="28" viewBox="0 0 16 16" fill="none" overflow="visible"><circle cx="8" cy="8" r="6.5" fill="#e7effd" stroke="#3574f0"/><path d="M10.45 6.0A3.0 3.05 0 1 0 10.45 10.0" stroke="#3574f0" stroke-width="1.1"/></svg>
<span id="tab1" class="t" style="left:748.88px;top:121px;font-size:23.2px;color:#4a4b52;font-weight:normal;letter-spacing:-0.287px;">DriverManager.java</span>
<svg style="left:990.80px;top:127.20px" width="28" height="28" viewBox="0 0 16 16" fill="none" overflow="visible"><path d="M2 3.3H13.7M2 6.3H9.7M2 9.3H13.7M2 12.3H9.7" stroke="#6c707e" stroke-width="1.05"/></svg>
<span id="tab2" class="t" style="left:1025.92px;top:121px;font-size:23.2px;color:#000;font-weight:normal;letter-spacing:-0.343px;">java.sql.Driver</span>
<svg style="left:1172px;top:132px" width="26" height="18" viewBox="1172 132 26 18" fill="none" overflow="visible"><path d="M1179.4 135.6L1190.6 146.8M1190.6 135.6L1179.4 146.8" stroke="#8f93a1" stroke-width="1.6"/></svg>
<svg style="left:2337px;top:126px" width="11" height="28" viewBox="2337 126 11 28" fill="none" overflow="visible"><circle cx="2342.2" cy="131.4" r="2.0" fill="#6c707e"/><circle cx="2342.2" cy="140.1" r="2.0" fill="#6c707e"/><circle cx="2342.2" cy="148.7" r="2.0" fill="#6c707e"/></svg>
<div class="abs" style="left:705px;top:168.1px;width:1669.6px;height:46.7px;background:#f5f8fe"></div>
<div class="abs" style="left:1078.9px;top:169.2px;width:79.9px;height:45.6px;background:#edebfc"></div>
<div class="hl" style="left:814px;top:168px;width:2px;height:1308px"></div>
<span class="t" id="ln" style="left:727.3px;top:170.6px;font-family:'Liberation Mono',monospace;font-size:27.5px;height:46px;line-height:46px;transform:scaleX(1.2088);transform-origin:0 0;color:#a4a9b8">1</span>
<span class="t" id="code" style="left:818.9px;top:170.6px;font-family:'Liberation Mono',monospace;font-size:27.5px;height:46px;line-height:46px;transform:scaleX(1.2088);transform-origin:0 0;color:#1e1e1e">com.mysql.cj.jdbc.Driver</span>
<div class="abs" style="left:1098.0px;top:173.4px;width:3.2px;height:38.6px;background:#000"></div>
<div class="abs" style="left:2108.8px;top:171.8px;width:262.4px;height:38px;border-radius:7px;background:#fff"></div>
<span id="rm" class="t" style="left:2151.13px;top:172px;font-size:23.2px;color:#6c707e;font-weight:normal;letter-spacing:0.111px;">Reader Mode</span>
<div class="abs" style="left:2325.2px;top:175px;width:1.6px;height:30.4px;background:#d3d5db"></div>
<svg style="left:2336px;top:178px" width="32" height="28" viewBox="2336 178 32 28" fill="none" overflow="visible"><path d="M2342.5 192L2345.3 189.1L2349 192.8L2358.9 184.2L2361.2 187L2349 198.9Z" stroke="#208a3c" stroke-width="1.6" fill="#fff" stroke-linejoin="round"/></svg>
<div class="abs" style="left:2350px;top:213.8px;width:24.4px;height:3.6px;background:#c9a3f5"></div>
<div class="hl" style="left:2374.2px;top:114px;width:1.4px;height:1362px"></div>
<div class="abs" style="left:2375.6px;top:114px;width:54px;height:1362px;background:#f7f8fa"></div>
<svg style="left:2388px;top:124px" width="36" height="36" viewBox="2388 124 36 36" fill="none" overflow="visible"><path d="M2411.6 136.5V141.5L2415.1 148.6C2415.3 149.1 2415 149.6 2414.4 149.6H2395.8C2395.2 149.6 2394.9 149.1 2395.1 148.6L2398.6 141.5V137.5C2398.6 133.6 2401.8 130.9 2405.1 130.9C2405.9 130.9 2406.6 131 2407.2 131.2" stroke="#6c707e" stroke-width="1.9" stroke-linecap="round" stroke-linejoin="round"/><path d="M2402 152.4H2408C2407.6 154.2 2406.4 155 2405 155C2403.6 155 2402.4 154.2 2402 152.4Z" fill="#6c707e"/><circle cx="2413.7" cy="132.8" r="5.1" fill="#4a86f2"/></svg>
<svg style="left:2388px;top:182px" width="36" height="32" viewBox="2388 182 36 32" fill="none" overflow="visible"><path d="M2396.30 189.30C2396.97 189.10 2398.90 188.35 2400.30 188.10C2401.70 187.85 2403.32 187.73 2404.70 187.80C2406.08 187.87 2407.45 188.12 2408.60 188.50C2409.75 188.88 2410.72 189.40 2411.60 190.10C2412.48 190.80 2413.35 191.68 2413.90 192.70C2414.45 193.72 2414.82 195.18 2414.90 196.20C2414.98 197.22 2414.75 198.02 2414.40 198.80C2414.05 199.58 2413.50 200.27 2412.80 200.90C2412.10 201.53 2411.17 202.18 2410.20 202.60C2409.23 203.02 2407.97 203.32 2407.00 203.40C2406.03 203.48 2405.17 203.33 2404.40 203.10C2403.63 202.87 2403.00 202.42 2402.40 202.00C2401.80 201.58 2401.15 201.10 2400.80 200.60C2400.45 200.10 2400.32 199.50 2400.30 199.00C2400.28 198.50 2400.43 197.97 2400.70 197.60C2400.97 197.23 2401.47 196.95 2401.90 196.80C2402.33 196.65 2402.88 196.62 2403.30 196.70C2403.72 196.78 2404.22 197.20 2404.40 197.30M2413.50 206.20C2412.98 206.38 2411.48 207.05 2410.40 207.30C2409.32 207.55 2408.18 207.73 2407.00 207.70C2405.82 207.67 2404.47 207.47 2403.30 207.10C2402.13 206.73 2401.05 206.20 2400.00 205.50C2398.95 204.80 2397.78 203.87 2397.00 202.90C2396.22 201.93 2395.57 200.68 2395.30 199.70C2395.03 198.72 2395.12 197.85 2395.40 197.00C2395.68 196.15 2396.32 195.27 2397.00 194.60C2397.68 193.93 2398.57 193.38 2399.50 193.00C2400.43 192.62 2401.62 192.38 2402.60 192.30C2403.58 192.22 2404.55 192.28 2405.40 192.50C2406.25 192.72 2407.08 193.18 2407.70 193.60C2408.32 194.02 2408.80 194.52 2409.10 195.00C2409.40 195.48 2409.52 196.02 2409.50 196.50C2409.48 196.98 2409.30 197.52 2409.00 197.90C2408.70 198.28 2408.15 198.63 2407.70 198.80C2407.25 198.97 2406.70 198.97 2406.30 198.90C2405.90 198.83 2405.47 198.48 2405.30 198.40" stroke="#6c707e" stroke-width="1.9" stroke-linecap="round"/></svg>
<svg style="left:2388px;top:236px" width="36" height="36" viewBox="2388 236 36 36" fill="none" overflow="visible"><ellipse cx="2405.05" cy="247" rx="9.5" ry="4.1" stroke="#6c707e" stroke-width="1.9"/><path d="M2395.55 247V261.2C2395.55 263.5 2399.8 265.3 2405.05 265.3C2410.3 265.3 2414.55 263.5 2414.55 261.2V247" stroke="#6c707e" stroke-width="1.9"/><path d="M2395.55 251.8C2395.55 254.1 2399.8 255.9 2405.05 255.9C2410.3 255.9 2414.55 254.1 2414.55 251.8M2395.55 256.5C2395.55 258.8 2399.8 260.6 2405.05 260.6C2410.3 260.6 2414.55 258.8 2414.55 256.5" stroke="#6c707e" stroke-width="1.9"/></svg>
<svg style="left:2388px;top:292px" width="36" height="34" viewBox="2388 292 36 34" fill="none" overflow="visible"><text x="2391.2" y="318.9" font-family="Liberation Sans" font-style="italic" font-size="35" textLength="27" lengthAdjust="spacingAndGlyphs" fill="#6c707e" stroke="#6c707e" stroke-width="0.5">m</text></svg>
<svg style="left:2388px;top:352px" width="36" height="28" viewBox="2388 352 36 28" fill="none" overflow="visible"><path d="M2399.94 358.16L2393.06 365.84L2400.60 372.98L2406.00 367.60" stroke="#000" stroke-width="3.1" stroke-linejoin="miter"/><path d="M2410.13 373.77L2417.00 366.63L2409.47 359.35L2404.20 363.80" stroke="#000" stroke-width="3.1" stroke-linejoin="miter"/><circle cx="2399.94" cy="358.16" r="1.55" fill="#000"/><circle cx="2410.13" cy="373.77" r="1.55" fill="#000"/><path d="M2402.19 364.51L2406.16 364.38L2408.01 365.84L2408.01 368.22L2404.04 368.22L2402.19 365.84Z" fill="#000"/><path d="M2403.25 366.10H2406.95" stroke="#9a9a9c" stroke-width="1.0"/></svg>
<svg style="left:2388px;top:404px" width="36" height="36" viewBox="2388 404 36 36" fill="none" overflow="visible"><path d="M2400.90 408.11L2405.40 408.11L2406.98 411.02L2414.66 411.02L2417.04 414.72L2415.45 418.16L2418.89 424.51L2417.57 428.48L2413.07 428.75L2409.37 435.62L2404.60 435.89L2402.75 432.45L2395.34 432.71L2392.96 428.48L2394.81 425.04L2391.11 418.16L2393.23 414.72L2397.20 414.72Z" fill="#000" stroke="#000" stroke-width="0.3" stroke-linejoin="round" /><path d="M2400.90 408.77L2403.28 412.61L2401.69 415.39L2416.38 415.39L2415.05 418.03L2400.50 418.03L2397.46 414.99Z" fill="#fff" /><path d="M2394.15 415.12L2397.33 414.99L2403.94 427.42L2402.35 431.79L2395.87 431.79L2397.46 428.75L2400.63 428.61Z" fill="#fff" /><path d="M2403.54 432.05L2410.03 419.22L2415.19 418.43L2418.23 424.38L2414.79 424.78L2412.67 422.26L2405.93 434.43Z" fill="#fff" /></svg>
<div class="abs" style="left:2383px;top:458.4px;width:42px;height:1.6px;background:#c9ccd6"></div>
<svg style="left:2388px;top:478px" width="36" height="38" viewBox="2388 478 36 38" fill="none" overflow="visible"><path d="M2415.6 484.2H2399C2396.7 484.2 2394.9 486 2394.9 488.3V505.8C2394.9 508.1 2396.7 509.9 2399 509.9H2415.4V490.7H2398.6M2398.6 487.5H2414.6" stroke="#6c707e" stroke-width="1.9"/><path d="M2402 505.2L2405.6 496H2406L2409.6 505.2M2403.2 502.1H2408.4" stroke="#6c707e" stroke-width="1.5"/></svg>
<div class="abs" style="left:0;top:1476px;width:2429px;height:41px;background:#f7f8fa"></div>
<div class="hl" style="left:0;top:1475px;width:2429px;height:1.5px"></div>
<svg style="left:22px;top:1488px" width="20" height="20" viewBox="22 1488 20 20" fill="none" overflow="visible"><rect x="25.8" y="1491.8" width="12.3" height="12.1" rx="3" fill="#e7effd" stroke="#3574f0" stroke-width="1.9"/></svg>
<span id="s1" class="t" style="left:46.36px;top:1478px;font-size:20.8px;color:#6c707e;font-weight:normal;letter-spacing:0.950px;">mysql-connector-j-8.0.33.jar</span>
<svg style="left:344px;top:1488px" width="16" height="20" viewBox="344 1488 16 20" fill="none" overflow="visible"><path d="M349.1 1492.0L355.7 1498.3L349.1 1504.6" stroke="#818594" stroke-width="1.6" stroke-linecap="square"/></svg>
<span id="s2" class="t" style="left:373.86px;top:1478px;font-size:20.8px;color:#6c707e;font-weight:normal;letter-spacing:0.540px;">META-INF</span>
<svg style="left:489px;top:1488px" width="16" height="20" viewBox="489 1488 16 20" fill="none" overflow="visible"><path d="M494.1 1492.0L500.7 1498.3L494.1 1504.6" stroke="#818594" stroke-width="1.6" stroke-linecap="square"/></svg>
<span id="s3" class="t" style="left:517.80px;top:1478px;font-size:20.8px;color:#6c707e;font-weight:normal;letter-spacing:0.576px;">services</span>
<svg style="left:612px;top:1488px" width="16" height="20" viewBox="612 1488 16 20" fill="none" overflow="visible"><path d="M617.0 1492.0L623.6 1498.3L617.0 1504.6" stroke="#818594" stroke-width="1.6" stroke-linecap="square"/></svg>
<svg style="left:642px;top:1486px" width="26" height="24" viewBox="642 1486 26 24" fill="none" overflow="visible"><path d="M645 1490H665M645 1495.2H658.4M645 1500.4H665M645 1505.6H658.4" stroke="#6c707e" stroke-width="1.7"/></svg>
<span id="s4" class="t" style="left:677.82px;top:1478px;font-size:20.8px;color:#6c707e;font-weight:normal;letter-spacing:0.548px;">java.sql.Driver</span>
<span id="s5" class="t" style="left:1912.19px;top:1478px;font-size:20.8px;color:#6c707e;font-weight:normal;letter-spacing:0.422px;">1:15</span>
<svg style="left:1978px;top:1482px" width="34" height="32" viewBox="1978 1482 34 32" fill="none" overflow="visible"><defs><linearGradient id="pg" x1="0" y1="0" x2="0.6" y2="1"><stop offset="0" stop-color="#7b7cf8"/><stop offset="0.45" stop-color="#5f4ff2"/><stop offset="1" stop-color="#5a1ee6"/></linearGradient></defs><path d="M1990.90 1484.11L1995.40 1484.11L1996.98 1487.02L2004.66 1487.02L2007.04 1490.72L2005.45 1494.16L2008.89 1500.51L2007.57 1504.48L2003.07 1504.75L1999.37 1511.62L1994.60 1511.89L1992.75 1508.45L1985.34 1508.71L1982.96 1504.48L1984.81 1501.04L1981.11 1494.16L1983.23 1490.72L1987.20 1490.72Z" fill="url(#pg)" stroke="#6a55f3" stroke-width="0.3" stroke-linejoin="round" /><path d="M1990.90 1484.77L1993.28 1488.61L1991.69 1491.39L2006.38 1491.39L2005.05 1494.03L1990.50 1494.03L1987.46 1490.99Z" fill="#ffffff" /><path d="M1984.15 1491.12L1987.33 1490.99L1993.94 1503.42L1992.35 1507.79L1985.87 1507.79L1987.46 1504.75L1990.63 1504.61Z" fill="#ffffff" /><path d="M1993.54 1508.05L2000.03 1495.22L2005.19 1494.43L2008.23 1500.38L2004.79 1500.78L2002.67 1498.26L1995.93 1510.43Z" fill="#ffffff" /></svg>
<svg style="left:2032px;top:1486px" width="38" height="26" viewBox="2032 1486 38 26" fill="none" overflow="visible"><path d="M2045.78 1490.06L2038.56 1498.13L2046.47 1505.62L2052.14 1499.98" stroke="#000" stroke-width="3.465" stroke-linejoin="miter"/><path d="M2056.48 1506.45L2063.69 1498.96L2055.79 1491.31L2050.25 1495.99" stroke="#000" stroke-width="3.465" stroke-linejoin="miter"/><circle cx="2045.78" cy="1490.06" r="1.7325" fill="#000"/><circle cx="2056.48" cy="1506.45" r="1.7325" fill="#000"/><path d="M2048.14 1496.73L2052.31 1496.59L2054.26 1498.13L2054.26 1500.63L2050.09 1500.63L2048.14 1498.13Z" fill="#000"/><path d="M2049.26 1498.40H2053.14" stroke="#9a9a9c" stroke-width="1.05"/></svg>
<svg style="left:2094px;top:1484px" width="28" height="28" viewBox="2094 1484 28 28" fill="none" overflow="visible"><rect x="2095.2" y="1485.6" width="11.3" height="11.9" fill="#f25022"/><rect x="2107.8" y="1485.6" width="11.3" height="11.9" fill="#7fba00"/><rect x="2095.2" y="1498.7" width="11.3" height="11.9" fill="#00a4ef"/><rect x="2107.8" y="1498.7" width="11.3" height="11.9" fill="#ffb900"/></svg>
<span id="s6" class="t" style="left:2148.66px;top:1478px;font-size:20.8px;color:#6c707e;font-weight:normal;letter-spacing:-1.070px;">CRLF</span>
<span id="s7" class="t" style="left:2227.96px;top:1478px;font-size:20.8px;color:#6c707e;font-weight:normal;letter-spacing:0.470px;">UTF-8</span>
<span id="s8" class="t" style="left:2314.48px;top:1478px;font-size:20.8px;color:#6c707e;font-weight:normal;letter-spacing:0.586px;">4 spaces</span>
</div></div>
<svg style="left:0;top:0" width="2429" height="1517" viewBox="0 0 2429 1517" fill="none"><path d="M0.6 14.5A13 13 0 0 1 13.5 1.4M2415.5 1.4A13 13 0 0 1 2428.4 14.5" stroke="#a9aaad" stroke-width="2.2"/><path d="M0.4 1504A12.6 12.6 0 0 0 13 1516.6M2416 1516.6A12.6 12.6 0 0 0 2428.6 1504" stroke="#9b9b9d" stroke-width="2"/></svg>
</div></body></html>
